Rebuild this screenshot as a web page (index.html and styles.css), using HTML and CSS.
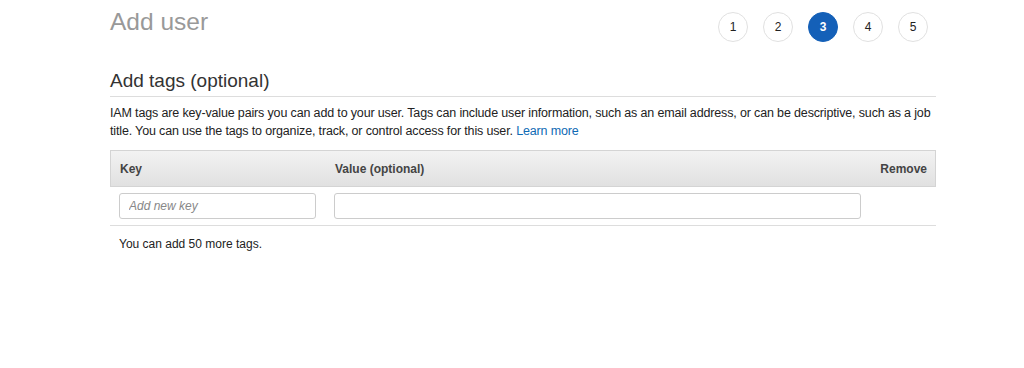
FILE: index.html
```html
<!DOCTYPE html>
<html lang="en">
  <head>
    <meta charset="UTF-8" />
    <title>Add user</title>
    <link rel="stylesheet" href="styles.css">
  </head>
  <body>
    <div class="container">
      <header class="page-header">
        <h1>Add user</h1>
        <ol class="steps">
          <li>1</li>
          <li>2</li>
          <li class="active">3</li>
          <li>4</li>
          <li>5</li>
        </ol>
      </header>

      <section class="section">
        <h2>Add tags (optional)</h2>
        <p class="intro">
          IAM tags are key-value pairs you can add to your user. Tags can include user information, such as an email address, or can be descriptive, such as a job
          title. You can use the tags to organize, track, or control access for this user. <a href="#">Learn more</a>
        </p>

        <div class="tags-table">
          <div class="tags-head">
            <div class="col-key">Key</div>
            <div class="col-value">Value (optional)</div>
            <div class="col-remove">Remove</div>
          </div>
          <div class="tags-row">
            <div class="col-key"><input type="text" placeholder="Add new key" /></div>
            <div class="col-value"><input type="text" /></div>
            <div class="col-remove"></div>
          </div>
        </div>

        <p class="note">You can add 50 more tags.</p>
      </section>
    </div>
  </body>
</html>
```

FILE: styles.css
```css
* {
  margin: 0;
  padding: 0;
  box-sizing: border-box;
}

body {
  font-family: "Liberation Sans", Arial, Helvetica, sans-serif;
  background: #fff;
  color: #333;
  font-size: 13px;
}

.container {
  width: 826px;
  margin-left: 110px;
}

.page-header {
  display: flex;
  justify-content: space-between;
  align-items: flex-start;
  height: 70px;
}

.page-header h1 {
  font-size: 24.5px;
  font-weight: normal;
  color: #999;
  margin-top: 8px;
}

.steps {
  list-style: none;
  display: flex;
  gap: 15px;
  margin-top: 12px;
  margin-right: 8px;
}

.steps li {
  width: 30px;
  height: 30px;
  border-radius: 50%;
  border: 1px solid #e1e1e1;
  display: flex;
  align-items: center;
  justify-content: center;
  font-size: 12px;
  color: #222;
}

.steps li.active {
  background: #1460b8;
  border-color: #1460b8;
  color: #fff;
  font-weight: bold;
}

.section h2 {
  font-size: 19px;
  font-weight: normal;
  color: #333;
  padding-bottom: 4px;
  border-bottom: 1px solid #ddd;
}

.intro {
  margin-top: 7px;
  line-height: 18px;
  color: #222;
  font-size: 12.5px;
  letter-spacing: -0.15px;
}

.intro a {
  color: #0f6ab4;
  text-decoration: none;
}

.tags-table {
  margin-top: 10px;
}

.tags-head,
.tags-row {
  display: grid;
  grid-template-columns: 215px 545px 66px;
  align-items: center;
}

.tags-head {
  height: 37px;
  background: linear-gradient(#f2f2f2, #e1e1e1);
  border: 1px solid #d4d4d4;
  font-weight: bold;
  font-size: 12px;
  color: #444;
}

.tags-head .col-key,
.tags-head .col-value {
  padding-left: 9px;
}

.tags-head .col-remove {
  text-align: right;
  padding-right: 10px;
}

.tags-row {
  height: 39px;
  border-bottom: 1px solid #ddd;
}

.tags-row .col-key,
.tags-row .col-value {
  padding-left: 9px;
}

.tags-row input {
  display: block;
  height: 26px;
  border: 1px solid #ccc;
  border-radius: 3px;
  padding: 0 9px;
  font-family: inherit;
  font-size: 12px;
}

.tags-row .col-key input {
  width: 197px;
}

.tags-row .col-value input {
  width: 527px;
}

.tags-row input::placeholder {
  color: #888;
  font-style: italic;
}

.note {
  margin-top: 11px;
  margin-left: 9px;
  font-size: 12px;
  color: #222;
}
```
